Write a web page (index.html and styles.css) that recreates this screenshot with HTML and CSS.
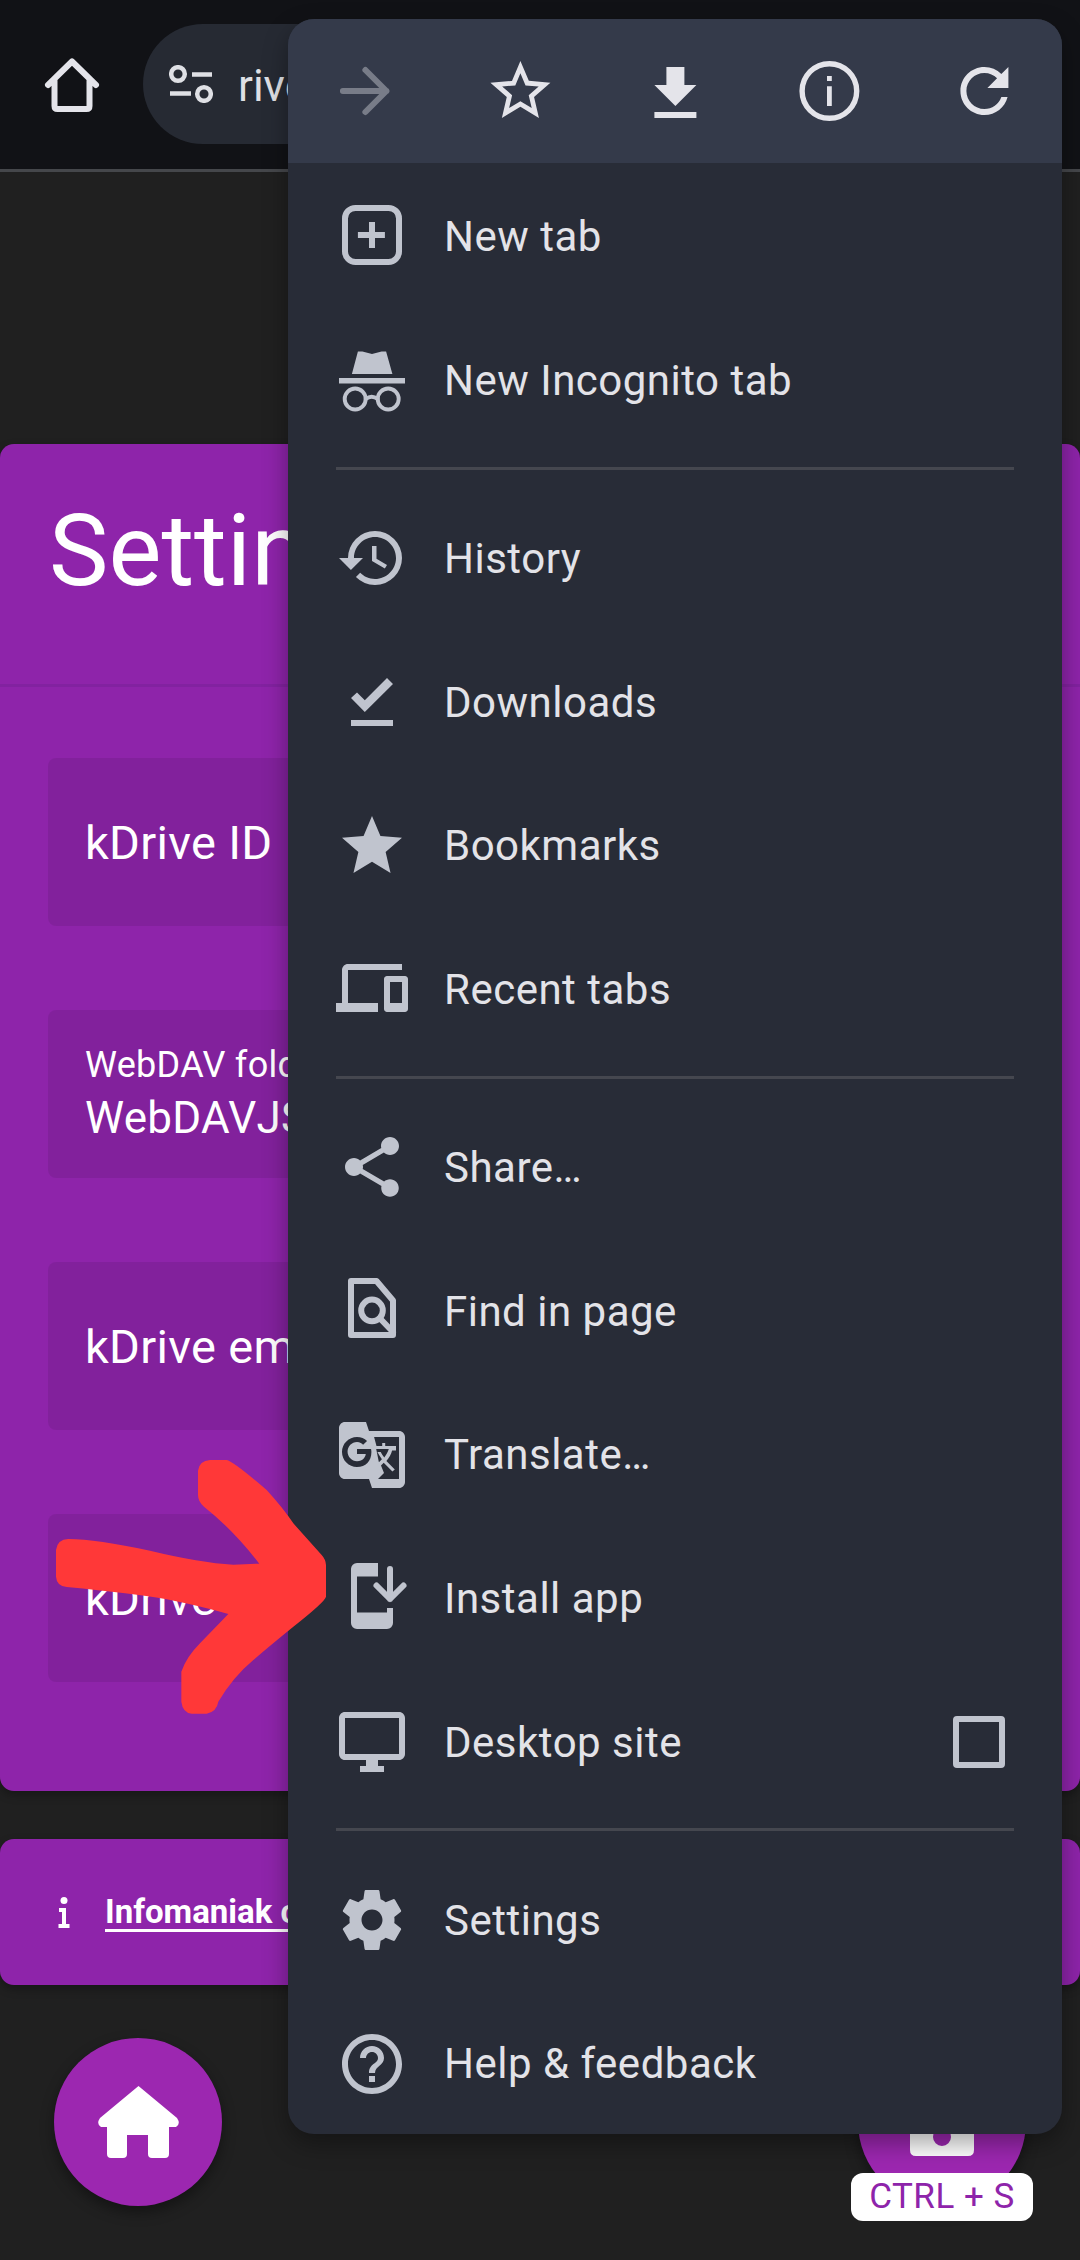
FILE: index.html
```html
<!DOCTYPE html>
<html lang="en">
<head>
<meta charset="utf-8" />
<meta name="viewport" content="width=device-width, initial-scale=1" />
<title>Settings</title>
<link rel="stylesheet" href="styles.css">
</head>
<body>

<header class="toolbar">
  <svg class="home-outline" viewBox="0 0 72 72"><path d="M12 36 36 12.500 60 36M18.500 31v26q0 3 3 3h29q3 0 3-3V31"/></svg>
  <div class="omnibox">
    <svg class="tune" viewBox="0 0 44 38"><circle cx="9" cy="9" r="6.800"/><path d="M23 9.500h20M1 28.500h21"/><circle cx="35" cy="29" r="6.800"/></svg>
    <span>rive</span>
  </div>
</header>

<main class="page">
  <section class="settings">
    <h1>Settings</h1>
    <div class="fields">
      <div class="field">kDrive ID</div>
      <div class="field"><small>WebDAV folder</small><span class="value">WebDAVJS</span></div>
      <div class="field">kDrive email</div>
      <div class="field">kDrive</div>
    </div>
  </section>
  <section class="info">
    <svg class="info-i" viewBox="0 0 12 31"><circle cx="6" cy="3.500" r="3.500"/><path d="M1 11h7v16h3.500v4H.5v-4H4v-12H1z"/></svg>
    <a href="#">Infomaniak c</a>
  </section>
  <div class="fabs">
    <a class="fab" href="#">
      <svg class="fab-home" viewBox="0 0 81 72"><path d="M40.500 0 79 32q4 6-1 9h-7v27q0 4-4 4H54q-4 0-4-4V49H29v19q0 4-4 4H13q-4 0-4-4V41H3q-5-3-1-9z"/></svg>
    </a>
    <a class="fab" href="#">
      <svg class="fab-save" viewBox="0 0 64 64"><path fill-rule="evenodd" d="M6 0h52q6 0 6 6v52q0 6-6 6H6q-6 0-6-6V6q0-6 6-6zm26 36a9 9 0 1 0 0 18 9 9 0 0 0 0-18z"/></svg>
      <span class="shortcut">CTRL + S</span>
    </a>
  </div>
</main>

<nav class="menu">
  <div class="menu-top">
    <svg class="icon off" viewBox="0 0 24 24"><path class="line" d="M4.500 12H19M12 5l7 7-7 7"/></svg>
    <svg class="icon" viewBox="0 0 24 24"><path d="M22 9.240l-7.190-.620L12 2 9.190 8.630 2 9.240l5.460 4.730L5.820 21 12 17.270 18.180 21l-1.630-7.030L22 9.240zM12 15.400l-3.760 2.270 1-4.280-3.320-2.880 4.380-.380L12 6.100l1.710 4.040 4.380.380-3.320 2.880 1 4.280L12 15.400z"/></svg>
    <svg class="icon" viewBox="0 0 24 24"><path d="M19 10h-4V4H9v6H5l7 7 7-7zM5 19v2h14v-2H5z"/></svg>
    <svg class="icon" viewBox="0 0 24 24"><circle class="line ring" cx="12" cy="12" r="9.100"/><path d="M11.200 7h1.600v1.700h-1.600zm0 3.400h1.600V17h-1.600z"/></svg>
    <svg class="icon" viewBox="0 0 24 24"><path d="M17.650 6.350A7.958 7.958 0 0 0 12 4c-4.420 0-7.990 3.580-7.990 8s3.570 8 7.990 8c3.730 0 6.840-2.550 7.730-6h-2.080A5.990 5.990 0 0 1 12 18c-3.310 0-6-2.690-6-6s2.690-6 6-6c1.660 0 3.140.690 4.220 1.780L13 11h7V4l-2.350 2.350z"/></svg>
  </div>

  <a class="row" href="#">
    <svg class="icon" viewBox="0 0 24 24"><rect class="line" x="3" y="2.300" width="18" height="18" rx="3.500"/><path d="M11 7h2v3.300h3.300v2H13v3.400h-2v-3.400H7.300v-2H11z"/></svg>
    New tab
  </a>
  <a class="row" href="#">
    <svg class="icon" viewBox="0 0 24 24"><path d="M7.300 2.200h1.500L12 3l3.200-.8h1.500L18.800 9.700H5.300zM1 11h22v1.800H1z"/><circle class="line thin" cx="6.400" cy="18" r="3.500"/><circle class="line thin" cx="17.400" cy="18" r="3.500"/><path class="line thin" d="M9.900 18q2-1.500 4 0"/></svg>
    New Incognito tab
  </a>
  <hr>
  <a class="row" href="#">
    <svg class="icon" viewBox="0 0 24 24"><path d="M13 3a9 9 0 0 0-9 9H1l3.890 3.890.070.140L9 12H6c0-3.870 3.130-7 7-7s7 3.130 7 7-3.130 7-7 7c-1.930 0-3.680-.790-4.940-2.060l-1.420 1.420A8.954 8.954 0 0 0 13 21a9 9 0 0 0 0-18zm-1 5v5l4.280 2.540.720-1.210-3.500-2.080V8H12z"/></svg>
    History
  </a>
  <a class="row" href="#">
    <svg class="icon" viewBox="0 0 24 24"><path d="M5 18h14v2H5v-2zm4.600-2.700L5 10.700l2-1.900 2.600 2.600L17 4l2 2-9.400 9.300z"/></svg>
    Downloads
  </a>
  <a class="row" href="#">
    <svg class="icon" viewBox="0 0 24 24"><path d="M12 17.270 18.180 21l-1.640-7.030L22 9.240l-7.190-.610L12 2 9.190 8.630 2 9.240l5.460 4.730L5.820 21z"/></svg>
    Bookmarks
  </a>
  <a class="row" href="#">
    <svg class="icon" viewBox="0 0 24 24"><path d="M4 5.300h18v-2H4c-1.100 0-2 .9-2 2v11H0v3h14v-3H4v-11zm19 2h-6c-.55 0-1 .45-1 1v10c0 .55.45 1 1 1h6c.55 0 1-.45 1-1v-10c0-.55-.45-1-1-1zm-1 9h-4v-7h4v7z"/></svg>
    Recent tabs
  </a>
  <hr>
  <a class="row" href="#">
    <svg class="icon" viewBox="0 0 24 24"><path d="M18 16.080c-.76 0-1.440.3-1.960.77L8.910 12.700c.05-.23.09-.46.09-.7s-.04-.47-.09-.7l7.050-4.110c.54.5 1.250.81 2.040.81 1.660 0 3-1.340 3-3s-1.340-3-3-3-3 1.340-3 3c0 .24.04.47.09.7L8.040 9.810C7.500 9.310 6.790 9 6 9c-1.660 0-3 1.340-3 3s1.340 3 3 3c.79 0 1.500-.31 2.040-.81l7.120 4.160c-.05.21-.08.43-.08.65 0 1.610 1.310 2.920 2.920 2.920 1.610 0 2.920-1.310 2.920-2.920s-1.310-2.920-2.920-2.920z"/></svg>
    Share…
  </a>
  <a class="row" href="#">
    <svg class="icon" viewBox="0 0 24 24"><path class="line" d="M5 2h8.500L19 8.500V20H5z"/><circle class="line" cx="12" cy="11.800" r="3.600"/><path class="line" d="m14.600 14.400 4.400 4.600"/></svg>
    Find in page
  </a>
  <a class="row" href="#">
    <svg class="icon" viewBox="0 0 24 24"><path d="M21 4H11l-1-3H3c-1.100 0-2 .9-2 2v15c0 1.100.9 2 2 2h8l1 3h9c1.100 0 2-.9 2-2V6c0-1.100-.9-2-2-2zM7 16c-2.760 0-5-2.240-5-5s2.240-5 5-5c1.350 0 2.480.5 3.350 1.300L9.030 8.570c-.38-.36-1.040-.92-2.030-.92-1.740 0-3.150 1.440-3.150 3.210S5.260 14.080 7 14.080c2.010 0 2.840-1.440 2.920-2.410H7v-1.710h4.680c.07.31.12.61.12 1.020C11.800 13.970 9.890 16 7 16zM21 20h-7l2-2-1-2.500.9-.9 2.900 2.900.8-.7-2.800-2.800c.9-1 1.600-2.300 1.900-3.500H20V9h-3.600V8h-1v1h-1.900L12.700 6H21v14zm-7.600-10h4.200c-.3 1-.9 2-1.500 2.800-.5-.6-.9-1.200-1.200-1.800h-1.100c.4.800.9 1.600 1.500 2.400l-1 1z"/></svg>
    Translate…
  </a>
  <a class="row" href="#">
    <svg class="icon" viewBox="0 0 24 24"><path d="M7 0h7v4.500H7v12h10V15h2v5a2 2 0 0 1-2 2H7a2 2 0 0 1-2-2V2a2 2 0 0 1 2-2z"/><path class="line" d="M18 2v10M13.500 7.500 18 12l4.500-4.500"/></svg>
    Install app
  </a>
  <a class="row" href="#">
    <svg class="icon" viewBox="0 0 24 24"><path d="M21 2H3c-1.100 0-2 .9-2 2v12c0 1.100.9 2 2 2h7v2H8v2h8v-2h-2v-2h7c1.100 0 2-.9 2-2V4c0-1.100-.9-2-2-2zm0 14H3V4h18v12z"/></svg>
    Desktop site
    <span class="check"></span>
  </a>
  <hr>
  <a class="row" href="#">
    <svg class="icon" viewBox="0 0 24 24"><path d="M19.430 12.980c.04-.32.07-.64.07-.98s-.03-.66-.07-.98l2.110-1.650c.19-.15.24-.42.12-.64l-2-3.460c-.12-.22-.39-.3-.61-.22l-2.490 1c-.52-.4-1.080-.73-1.690-.98l-.38-2.650C14.460 2.180 14.250 2 14 2h-4c-.25 0-.46.18-.49.42l-.38 2.650c-.61.25-1.170.59-1.690.98l-2.490-1c-.23-.09-.49 0-.61.22l-2 3.460c-.13.22-.07.49.12.64l2.110 1.650c-.04.32-.07.65-.07.98s.03.66.07.98l-2.110 1.650c-.19.15-.24.42-.12.64l2 3.460c.12.22.39.3.61.22l2.490-1c.52.4 1.080.73 1.690.98l.38 2.650c.03.24.24.42.49.42h4c.25 0 .46-.18.49-.42l.38-2.650c.61-.25 1.170-.59 1.690-.98l2.490 1c.23.09.49 0 .61-.22l2-3.460c.12-.22.07-.49-.12-.64l-2.110-1.650zM12 15.500c-1.930 0-3.500-1.570-3.500-3.500s1.570-3.500 3.500-3.500 3.500 1.570 3.500 3.500-1.570 3.500-3.500 3.500z"/></svg>
    Settings
  </a>
  <a class="row" href="#">
    <svg class="icon" viewBox="0 0 24 24"><path d="M11 18h2v-2h-2v2zm1-16C6.480 2 2 6.480 2 12s4.480 10 10 10 10-4.480 10-10S17.520 2 12 2zm0 18c-4.410 0-8-3.590-8-8s3.590-8 8-8 8 3.590 8 8-3.590 8-8 8zm0-14c-2.210 0-4 1.790-4 4h2c0-1.100.9-2 2-2s2 .9 2 2c0 2-3 1.750-3 5h2c0-2.250 3-2.500 3-5 0-2.210-1.790-4-4-4z"/></svg>
    Help &amp; feedback
  </a>
</nav>

<!-- hand drawn arrow on top of the screenshot -->
<svg class="scribble" viewBox="0 0 1500 1080"><path d="M168 450Q172 418 205 417Q290 418 450 452Q600 488 700 494L778 491Q700 390 612 320Q594 305 594 285V212Q598 182 630 180H680Q700 184 800 270Q850 325 880 370L965 465Q977 478 978 495V590Q975 605 880 680Q800 745 760 780Q700 830 655 905Q650 935 620 941H575Q548 938 544 905V815Q560 770 600 730L685 642Q600 618 500 598Q400 580 200 561Q170 558 168 530z"/></svg>

</body>
</html>
```

FILE: styles.css
```css
html {font-family: Roboto, sans-serif;}
body {margin: 0; width: 1080px; height: 2260px; overflow: hidden; position: relative; background: #202020; color: #fff;}
a {color: inherit; text-decoration: none;}

/* browser bar */
.toolbar {display: flex; align-items: center; height: 169px; padding-left: 36px; gap: 35px; background: #111216; border-bottom: 3px solid #45474b;}
.home-outline {width: 72px; height: 72px; fill: none; stroke: #e4e4ea; stroke-width: 6; stroke-linecap: round; stroke-linejoin: round;}
.omnibox {display: flex; align-items: center; gap: 25px; width: 800px; height: 120px; margin-top: -1px; padding-left: 26px; border-radius: 60px; background: #262a33; font-size: 44px; color: #dfe0e5;}
.omnibox span {margin-top: 4px;}
.tune {width: 44px; height: 38px; fill: none; stroke: #dfe0e5; stroke-width: 4.500;}

/* page behind the menu */
.page {padding-top: 272px;}
.settings {height: 1347px; border-radius: 14px; background: #8e24aa; box-shadow: 0 4px 10px rgba(0,0,0,.3);}
.settings h1 {height: 243px; margin: 0; padding-left: 49px; box-sizing: border-box; border-bottom: 3px solid #8222a0; font-size: 100px; font-weight: 400; line-height: 214px;}
.fields {display: flex; flex-direction: column; gap: 84px; padding: 71px 48px 0;}
.field {display: flex; flex-direction: column; justify-content: center; height: 168px; padding-left: 37px; border-radius: 8px; background: rgba(0,0,0,.08); font-size: 47px; letter-spacing: .3px; white-space: nowrap;}
.field small {margin-bottom: 6px; font-size: 36px;}
.field .value {font-size: 44px;}
.info {display: flex; align-items: center; gap: 34px; height: 146px; margin-top: 48px; padding-left: 58px; border-radius: 14px; background: #8e24aa; font-size: 33px; font-weight: 700; box-shadow: 0 4px 10px rgba(0,0,0,.3);}
.info a {margin-top: -2px; margin-left: 1px; text-decoration: underline; text-decoration-thickness: 3px; text-underline-offset: 6px;}
.info-i {width: 12px; height: 31px; fill: #fff;}
.fabs {display: flex; justify-content: space-between; margin-top: 53px; padding: 0 54px;}
.fab {position: relative; display: flex; align-items: center; justify-content: center; width: 168px; height: 168px; border-radius: 50%; background: #9c27b0; box-shadow: 0 6px 14px rgba(0,0,0,.4);}
.fab-home {width: 81px; height: 72px; fill: #fff;}
.fab-save {width: 64px; height: 64px; fill: #fff; margin-top: 4px;}
.shortcut {position: absolute; left: -7px; top: 135px; width: 182px; height: 48px; border-radius: 12px; background: #fff; color: #8e24aa; font-size: 35px; letter-spacing: .5px; line-height: 48px; text-align: center;}

/* chrome menu */
.menu {position: absolute; left: 288px; top: 19px; width: 774px; height: 2115px; overflow: hidden; border-radius: 26px; background: #282c37; color: #e3e3e8; font-size: 42px; letter-spacing: .5px; box-shadow: 0 10px 24px rgba(0,0,0,.35);}
.menu-top {display: flex; height: 144px; margin-bottom: 2px; background: #343a4a; color: #e4e4ea;}
.menu-top .icon {flex: 1; align-self: center;}
.menu-top .off {color: #787c88;}
.icon {width: 72px; height: 72px; flex: none; fill: currentColor;}
.row {display: flex; align-items: center; gap: 36px; height: 143.750px; padding-left: 48px;}
.row .icon {color: #c0c4ce;}
.line {fill: none; stroke: currentColor; stroke-width: 2; stroke-linecap: round; stroke-linejoin: round;}
.line.thin {stroke-width: 1.300;}
.line.ring {stroke-width: 1.800;}
.menu hr {height: 3px; margin: 14px 48px 17px; border: 0; background: #45474f;}
.check {width: 52px; height: 52px; margin-left: auto; margin-right: 57px; box-sizing: border-box; border: 6px solid #c0c4ce; border-radius: 4px;}

/* red annotation */
.scribble {position: absolute; left: 0; top: 1400px; width: 500px; height: 360px; fill: #ff3838;}
```
